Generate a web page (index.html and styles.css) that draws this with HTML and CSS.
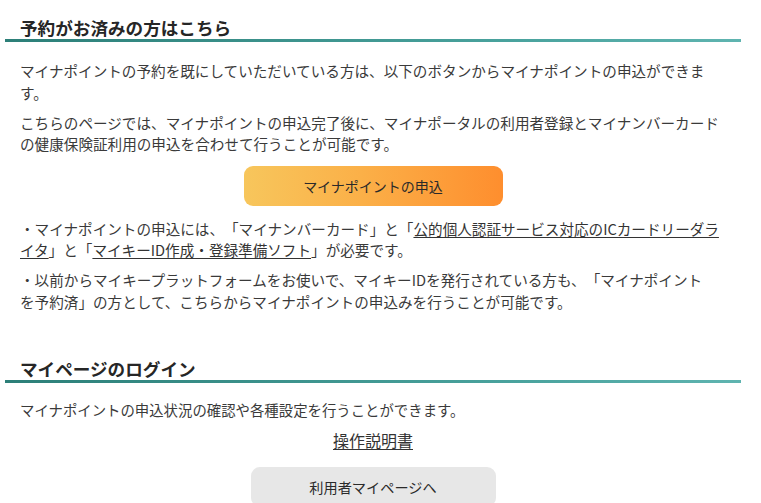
FILE: index.html
```html
<!DOCTYPE html>
<html lang="ja">
<head>
<meta charset="utf-8">
<title>マイナポイント</title>
<link rel="stylesheet" href="styles.css">
</head>
<body>
<main class="page">
  <section class="block block-first">
    <h2 class="block-title">予約がお済みの方はこちら</h2>
    <div class="block-body">
      <p class="text">マイナポイントの予約を既にしていただいている方は、以下のボタンからマイナポイントの申込ができま<br>す。</p>
      <p class="text">こちらのページでは、マイナポイントの申込完了後に、マイナポータルの利用者登録とマイナンバーカード<br>の健康保険証利用の申込を合わせて行うことが可能です。</p>
      <div class="btn-row btn-row-orange">
        <a class="btn btn-orange" href="#">マイナポイントの申込</a>
      </div>
      <p class="text note-first">・マイナポイントの申込には、「マイナンバーカード」と「<a class="link" href="#">公的個人認証サービス対応のICカードリーダラ<br>イタ</a>」と「<a class="link" href="#">マイキーID作成・登録準備ソフト</a>」が必要です。</p>
      <p class="text">・以前からマイキープラットフォームをお使いで、マイキーIDを発行されている方も、「マイナポイント<br>を予約済」の方として、こちらからマイナポイントの申込みを行うことが可能です。</p>
    </div>
  </section>
  <section class="block block-second">
    <h2 class="block-title">マイページのログイン</h2>
    <div class="block-body">
      <p class="text text-login">マイナポイントの申込状況の確認や各種設定を行うことができます。</p>
      <div class="manual-row"><a class="link manual" href="#">操作説明書</a></div>
      <div class="btn-row btn-row-grey">
        <a class="btn btn-grey" href="#">利用者マイページへ</a>
      </div>
    </div>
  </section>
</main>
</body>
</html>
```
FILE: styles.css
```css
html, body {
  margin: 0;
  padding: 0;
  background: #ffffff;
}
body {
  font-family: "Noto Sans CJK JP", "Noto Sans", sans-serif;
  color: #3a3a3a;
  text-spacing-trim: space-all;
  overflow: hidden;
}
.page {
  width: 736px;
  margin-left: 5px;
}
.block-first {
  padding-top: 16px;
}
.block-second {
  padding-top: 45px;
}
.block-title {
  margin: 0;
  padding-left: 15px;
  font-size: 17.6px;
  line-height: 23px;
  font-weight: 700;
  color: #262626;
  border-bottom: 3px solid #3b918b;
  border-image: linear-gradient(90deg, #2c7f78, #4aa39e 70%, #5fb4b0) 1;
}
.block-body {
  padding-left: 15px;
}
.text {
  margin: 8.5px 0 0;
  font-size: 14.6px;
  line-height: 21.5px;
}
.block-first .block-body > .text:first-child {
  margin-top: 18px;
}
.note-first {
  margin-top: 12px;
}
.link {
  color: #333333;
  text-decoration: underline;
  text-underline-offset: 2px;
  text-decoration-thickness: 1px;
}
.btn-row {
  display: flex;
  justify-content: center;
  padding-right: 15px;
}
.btn-row-orange {
  margin-top: 11px;
  margin-left: -15px;
  padding-right: 0;
}
.btn {
  display: flex;
  align-items: center;
  justify-content: center;
  height: 40px;
  border-radius: 9px;
  text-decoration: none;
  color: #2a2a2a;
  font-size: 14px;
}
.btn-orange {
  width: 259px;
  background: linear-gradient(90deg, #f7c65c 0%, #fbb048 45%, #fe8e2e 100%);
}
.text-login {
  margin-top: 16px;
  font-size: 14.4px;
}
.manual-row {
  display: flex;
  justify-content: center;
  margin-top: 9px;
  margin-left: -15px;
  line-height: 21.5px;
}
.manual {
  font-size: 16px;
}
.btn-row-grey {
  margin-top: 15.5px;
  margin-left: -15px;
  padding-right: 0;
}
.btn-grey {
  width: 245px;
  background: #e7e7e7;
  font-size: 14.2px;
}
```
